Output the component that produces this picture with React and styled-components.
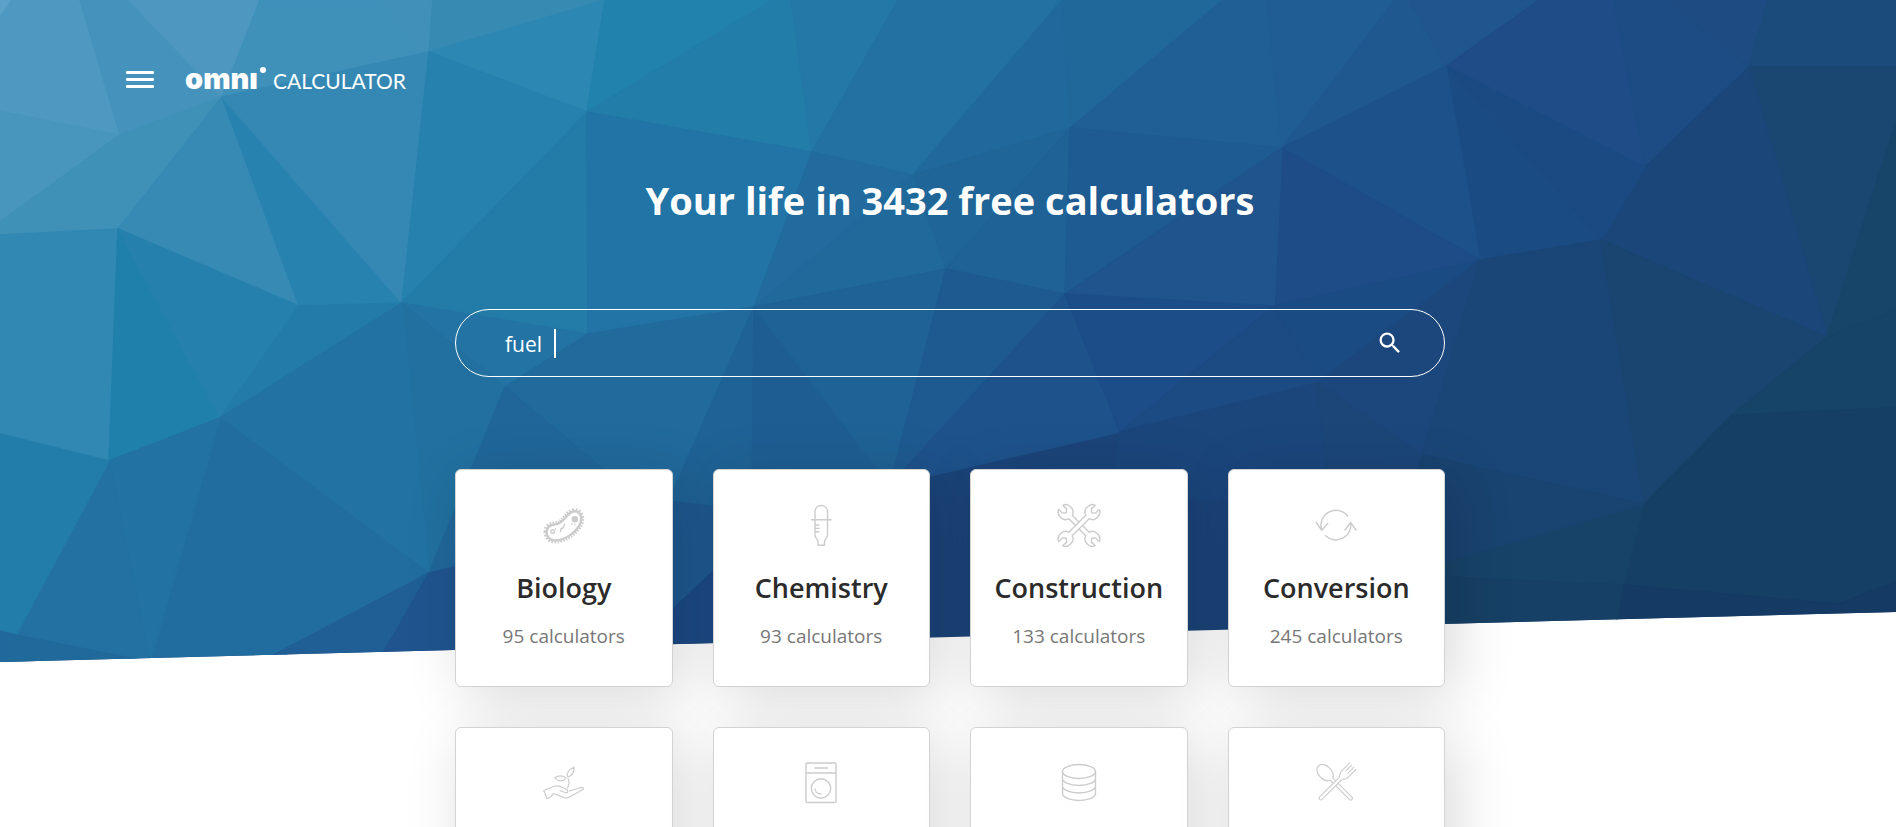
import React from "react";
import styled, { createGlobalStyle } from "styled-components";
import { MdSearch } from "react-icons/md";

const GlobalStyle = createGlobalStyle`
  *, *::before, *::after { box-sizing: border-box; }
  body {
    margin: 0;
    background: #fff;
    font-family: "Open Sans", "Noto Sans", sans-serif;
    color: #2b2b2b;
  }
`;

const Page = styled.div`
  position: relative;
  height: 100vh;
  overflow: hidden;
`;

const Backdrop = styled.div`
  position: absolute;
  inset: 0 0 auto;
  height: 662px;
  clip-path: polygon(0 0, 100% 0, 100% calc(100% - 50px), 0 100%);

  svg {
    display: block;
    width: 100%;
    height: 100%;
  }
`;

const Content = styled.div`
  position: relative;
`;

const Header = styled.header`
  display: flex;
  align-items: center;
  gap: 30px;
  padding: 64px 125px 0;
  height: 94px;
`;

const MenuButton = styled.button`
  display: flex;
  flex-direction: column;
  gap: 4px;
  width: 30px;
  padding: 0 1px;
  border: 0;
  background: none;
  cursor: pointer;
`;

const MenuBar = styled.span`
  height: 3px;
  border-radius: 1px;
  background: #fff;
`;

const Logo = styled.a`
  display: flex;
  align-items: baseline;
  gap: 7px;
  padding-top: 2px;
  color: #fff;
  text-decoration: none;
`;

const LogoMark = styled.span`
  position: relative;
  padding-right: 8px;
  font: 900 29px/30px Inter, sans-serif;

  &::after {
    content: "";
    position: absolute;
    top: 3px;
    right: 0;
    width: 6px;
    height: 6px;
    border-radius: 50%;
    background: #fff;
  }
`;

const LogoWord = styled.span`
  font: 400 21px/30px Lato, sans-serif;
`;

const Main = styled.main`
  display: flex;
  flex-direction: column;
  align-items: center;
  padding: 76px 0 0 4px;
`;

const Title = styled.h1`
  margin: 0;
  color: #fff;
  font-size: 38px;
  font-weight: 700;
  line-height: 60px;
`;

const SearchForm = styled.form`
  display: flex;
  align-items: center;
  width: 100%;
  max-width: 990px;
  height: 68px;
  margin-top: 79px;
  padding: 0 40px 0 49px;
  border: 1px solid #fff;
  border-radius: 34px;
`;

const SearchInput = styled.input`
  field-sizing: content;
  min-width: 0;
  padding: 2px 0 0;
  border: 0;
  outline: 0;
  background: none;
  color: #fff;
  font: 400 21px/32px "Open Sans", "Noto Sans", sans-serif;
`;

const Caret = styled.span`
  width: 2px;
  height: 29px;
  margin-left: 6px;
  background: #fff;
`;

const SearchButton = styled.button`
  display: flex;
  margin-left: auto;
  padding: 0;
  border: 0;
  background: none;
  color: #fff;
  font-size: 28px;
  cursor: pointer;
`;

const CardGrid = styled.nav`
  display: grid;
  grid-template-columns: repeat(4, 1fr);
  gap: 40px;
  width: 100%;
  max-width: 990px;
  margin-top: 92px;
`;

const Card = styled.a`
  display: flex;
  flex-direction: column;
  align-items: center;
  min-height: 218px;
  padding-top: 35px;
  border: 1px solid #d3d3d3;
  border-radius: 6px;
  background: #fff;
  box-shadow: 10px 10px 60px rgba(0, 0, 0, 0.15);
  color: inherit;
  text-decoration: none;
`;

const CardIcon = styled.svg`
  width: 42px;
  height: 42px;
  overflow: visible;
  fill: none;
  stroke: #ccc;
  stroke-width: 1.4;
  stroke-linecap: round;
  stroke-linejoin: round;
`;

const CardName = styled.h2`
  margin: 21px 0 0;
  font-size: 27px;
  font-weight: 600;
  line-height: 40px;
`;

const CardCount = styled.span`
  margin-top: 14px;
  color: #777;
  font-size: 19px;
  line-height: 28px;
`;

const facets = [
  ["0,0 12,0 0,17", "#5ba1c8"],
  ["12,0 80,0 120,135 0,111 0,17", "#4e99c2"],
  ["80,0 129,0 222,97 120,135", "#4593bc"],
  ["129,0 260,0 222,97", "#4e97c0"],
  ["260,0 382,0 429,52 222,97", "#3f91ba"],
  ["382,0 433,0 429,52", "#4190b9"],
  ["433,0 605,0 429,52", "#378bb2"],
  ["605,0 587,112 429,52", "#2d87b3"],
  ["605,0 773,0 587,112", "#2182ad"],
  ["773,0 791,0 812,152 587,112", "#237da9"],
  ["791,0 898,0 812,152", "#2378a7"],
  ["898,0 1062,0 913,175 812,152", "#2271a2"],
  ["1062,0 1070,128 913,175", "#20699c"],
  ["1062,0 1223,0 1070,128", "#20689a"],
  ["1223,0 1267,0 1282,148 1070,128", "#205f95"],
  ["1267,0 1395,0 1282,148", "#1f5d94"],
  ["1395,0 1409,0 1446,66 1282,148", "#1f588f"],
  ["1409,0 1539,0 1446,66", "#1f568d"],
  ["1539,0 1614,0 1645,167 1446,66", "#1f4c87"],
  ["1614,0 1667,0 1749,67 1645,167", "#1c4c83"],
  ["1667,0 1768,0 1749,67", "#1d4b82"],
  ["1768,0 1896,0 1896,67 1749,67", "#1b4b7b"],
  ["1749,67 1896,67 1896,122 1827,337", "#1a4672"],
  ["1896,122 1896,310 1827,337", "#174569"],
  ["1749,67 1827,337 1601,240 1645,167", "#1a467a"],
  ["1446,66 1645,167 1601,240", "#1b4a83"],
  ["1446,66 1601,240 1480,260", "#1b4b83"],
  ["1282,148 1446,66 1480,260", "#1d5189"],
  ["1282,148 1480,260 1274,306", "#1d4c87"],
  ["1274,306 1480,260 1317,383", "#1b4b83"],
  ["1480,260 1317,383 1422,455", "#1c477d"],
  ["1480,260 1601,240 1644,504 1422,455", "#1a4677"],
  ["1601,240 1827,337 1732,415 1644,504", "#1a4570"],
  ["1827,337 1896,310 1896,408 1732,415", "#164368"],
  ["1732,415 1896,408 1896,582 1838,604 1623,585 1644,504", "#163f66"],
  ["1644,504 1623,585 1400,575", "#174369"],
  ["1422,455 1644,504 1400,575", "#194370"],
  ["1623,585 1838,604 1896,582 1896,662 1610,662", "#153a63"],
  ["1400,575 1623,585 1610,662 1380,662", "#164065"],
  ["0,111 120,135 0,222", "#4895be"],
  ["120,135 222,97 118,229 0,235 0,222", "#3f91b8"],
  ["222,97 118,229 299,306", "#368ab4"],
  ["222,97 299,306 402,303", "#2882b0"],
  ["222,97 429,52 402,303", "#3588b4"],
  ["429,52 587,112 402,303", "#2681ae"],
  ["118,229 0,235 0,434 109,461", "#3088b3"],
  ["118,229 109,461 220,418", "#2080ac"],
  ["118,229 220,418 299,306", "#2680ad"],
  ["299,306 402,303 220,418", "#237ba9"],
  ["402,303 587,112 588,334", "#237ba8"],
  ["587,112 812,152 754,307 588,334", "#2174a5"],
  ["812,152 913,175 754,307", "#216b9e"],
  ["913,175 946,269 754,307", "#20699b"],
  ["913,175 1070,128 946,269", "#206597"],
  ["1070,128 1065,294 946,269", "#1f6295"],
  ["1070,128 1282,148 1065,294", "#1d5b92"],
  ["1282,148 1065,294 1274,306", "#1f548c"],
  ["402,303 588,334 505,387", "#2374a4"],
  ["588,334 754,307 678,480 665,510 640,500 505,387", "#216a9c"],
  ["402,303 505,387 429,573", "#21709f"],
  ["402,303 220,418 429,573", "#2273a4"],
  ["220,418 429,573 273,662 150,662", "#226da0"],
  ["109,461 220,418 150,662", "#2272a3"],
  ["109,461 150,662 16,635", "#2271a2"],
  ["0,434 109,461 16,635 0,631", "#237daa"],
  ["0,631 16,635 150,662 0,662", "#20699b"],
  ["505,387 640,500 640,560 429,573", "#206699"],
  ["429,573 378,662 260,662", "#205f96"],
  ["429,573 520,552 520,662 378,662", "#1f548e"],
  ["754,307 752,510 665,510", "#1f6295"],
  ["754,307 890,485 752,510", "#1e5d92"],
  ["754,307 946,269 890,485", "#1f6295"],
  ["946,269 1065,294 890,485", "#1e5a90"],
  ["1065,294 1120,432 890,485", "#1e528b"],
  ["1065,294 1274,306 1120,432", "#1c4d88"],
  ["1274,306 1317,383 1120,432", "#1c4a82"],
  ["1120,432 1317,383 1330,500 1110,500", "#1b467c"],
  ["1317,383 1422,455 1400,500 1330,500", "#1b4677"],
  ["640,498 720,507 720,573 640,640", "#1e588f"],
  ["720,565 760,662 640,662 640,640", "#1c4a84"],
];

const icons = {
  biology: (
    <>
      <path
        d="M3.5 27C3.5 21 8 19.5 14 19 21 18 23 8.5 30 6.5 36 5 40 11 37.5 18 34 27 22 35.5 12 35.5 7 35.5 3.5 32 3.5 27Z"
        strokeWidth="6"
        strokeDasharray="1.4 1.3"
        strokeLinecap="butt"
      />
      <path
        d="M3.5 27C3.5 21 8 19.5 14 19 21 18 23 8.5 30 6.5 36 5 40 11 37.5 18 34 27 22 35.5 12 35.5 7 35.5 3.5 32 3.5 27Z"
        fill="#fff"
        strokeWidth="2.4"
      />
      <circle cx="31.8" cy="14.3" r="2.6" fill="#ccc" />
      <circle cx="9.7" cy="26.5" r="1.8" />
      <path d="M21.5 19.5 20 23l-2 .6-.5 3M12.5 24v.2M29 19v.2M32 19.5v.2" />
    </>
  ),
  chemistry: (
    <path d="M15 15V7c0-8.6 12.500-8.6 12.500 0v23c0 3-3 4-3 6.500v3.700h-6.500v-3.700C18 34 15 33 15 30ZM11.500 14.700h19.500M15.500 20h3.500M15.500 23.400h3.500M15.500 26.800h3.500" />
  ),
  construction: (
    <>
      {[45, -45].map((angle) => (
        <path
          key={angle}
          transform={`translate(21 20.5) rotate(${angle})`}
          fill="#fff"
          d="M-12-2.400H12C13-6 16-7.300 19-7.200 22.500-7.200 25-5.500 25.600-2.800L20.500-3 18 0 20.500 3 25.600 2.800C25 5.500 22.500 7.200 19 7.200 16 7.300 13 6 12 2.400H-12C-13 6-16 7.300-19 7.200-22.500 7.200-25 5.500-25.600 2.800L-20.500 3-18 0-20.500-3-25.600-2.800C-25-5.500-22.500-7.200-19-7.200-16-7.300-13-6-12-2.400Z"
        />
      ))}
    </>
  ),
  conversion: (
    <path d="M32.700 11A15 15 0 0 0 6.700 25M1.300 17.500 6.700 25.300 12.700 18.500M10.300 30.500A15 15 0 0 0 35.700 17.300M30 25 35.700 17.300 41 25" />
  ),
  ecology: (
    <path
      strokeWidth="1.2"
      d="M31 4C25 7 23 11 25 14 30 12 31.500 9 31 4ZM11.700 14.500C16 12 20 12.500 23 15 20 19 15 19 11.700 14.500ZM25 15.500C26.500 18 26 22 24.500 25M.7 27.500 4 35.700C7 35 8.500 33.500 10.500 30.500L22 35C24 35.500 26 34.500 28 33.200L40 26.500C42 24.500 38 24 36 25L26.500 28M.7 27.500 12 23C17 22 21 25 24 27 26 29 24 30 22 29.500L17 27.500"
    />
  ),
  everyday: (
    <>
      <rect x="6" y="0" width="30" height="39.500" rx="1" />
      <path d="M6 10h30M15 5h12.500M15 26a6 6 0 0 0 6 5" />
      <circle cx="21" cy="25.500" r="9.700" />
    </>
  ),
  finance: (
    <>
      <ellipse cx="21" cy="8.500" rx="16.500" ry="7" />
      <path d="M4.500 8.500V30.500A16.500 7 0 0 0 37.500 30.500V8.500M4.500 15.500A16.500 7 0 0 0 37.500 15.500M4.500 23A16.500 7 0 0 0 37.500 23" />
    </>
  ),
  food: (
    <>
      <path
        transform="translate(20.7 20.3) rotate(45)"
        fill="#fff"
        strokeWidth="1.2"
        d="M-6-1.700C-7-4.500-10-6.500-15-6.500-20-6.500-24.500-4-24.500 0-24.500 4-20 6.500-15 6.500-10 6.500-7 4.500-6 1.700H21C23.500 1.700 23.500-1.700 21-1.700Z"
      />
      <path
        transform="translate(20.7 20.3) rotate(-45)"
        fill="#fff"
        strokeWidth="1.1"
        d="M24-4.500H13C9-4.500 8.500-1.700 6-1.700H-21C-23.500-1.700-23.500 1.700-21 1.700H6C8.500 1.700 9 4.500 13 4.500H24M24-1.500H16M24 1.500H16"
      />
    </>
  ),
};

const categories = [
  { icon: "biology", name: "Biology", count: 95 },
  { icon: "chemistry", name: "Chemistry", count: 93 },
  { icon: "construction", name: "Construction", count: 133 },
  { icon: "conversion", name: "Conversion", count: 245 },
  { icon: "ecology", label: "Ecology" },
  { icon: "everyday", label: "Everyday life" },
  { icon: "finance", label: "Finance" },
  { icon: "food", label: "Food" },
];

function HeroBackdrop() {
  return (
    <Backdrop aria-hidden="true">
      <svg viewBox="0 0 1896 662" preserveAspectRatio="none">
        <rect width="1896" height="662" fill="#1b4479" />
        {facets.map(([points, color]) => (
          <polygon key={points} points={points} fill={color} stroke={color} strokeWidth="1.5" strokeLinejoin="round" />
        ))}
      </svg>
    </Backdrop>
  );
}

function CategoryCard({ icon, name, label, count }) {
  return (
    <Card href={`#${icon}`} aria-label={label}>
      <CardIcon viewBox="0 0 42 42" aria-hidden="true">
        {icons[icon]}
      </CardIcon>
      {name && <CardName>{name}</CardName>}
      {count && <CardCount>{count} calculators</CardCount>}
    </Card>
  );
}

export default function App() {
  return (
    <Page>
      <GlobalStyle />
      <HeroBackdrop />
      <Content>
        <Header>
          <MenuButton type="button" aria-label="Menu">
            <MenuBar />
            <MenuBar />
            <MenuBar />
          </MenuButton>
          <Logo href="#home" aria-label="Omni Calculator">
            <LogoMark>omnı</LogoMark>
            <LogoWord>CALCULATOR</LogoWord>
          </Logo>
        </Header>
        <Main>
          <Title>Your life in 3432 free calculators</Title>
          <SearchForm role="search" onSubmit={(event) => event.preventDefault()}>
            <SearchInput type="text" aria-label="Search calculators" defaultValue="fuel " />
            <Caret />
            <SearchButton type="submit" aria-label="Search">
              <MdSearch />
            </SearchButton>
          </SearchForm>
          <CardGrid aria-label="Categories">
            {categories.map((category) => (
              <CategoryCard key={category.icon} {...category} />
            ))}
          </CardGrid>
        </Main>
      </Content>
    </Page>
  );
}
